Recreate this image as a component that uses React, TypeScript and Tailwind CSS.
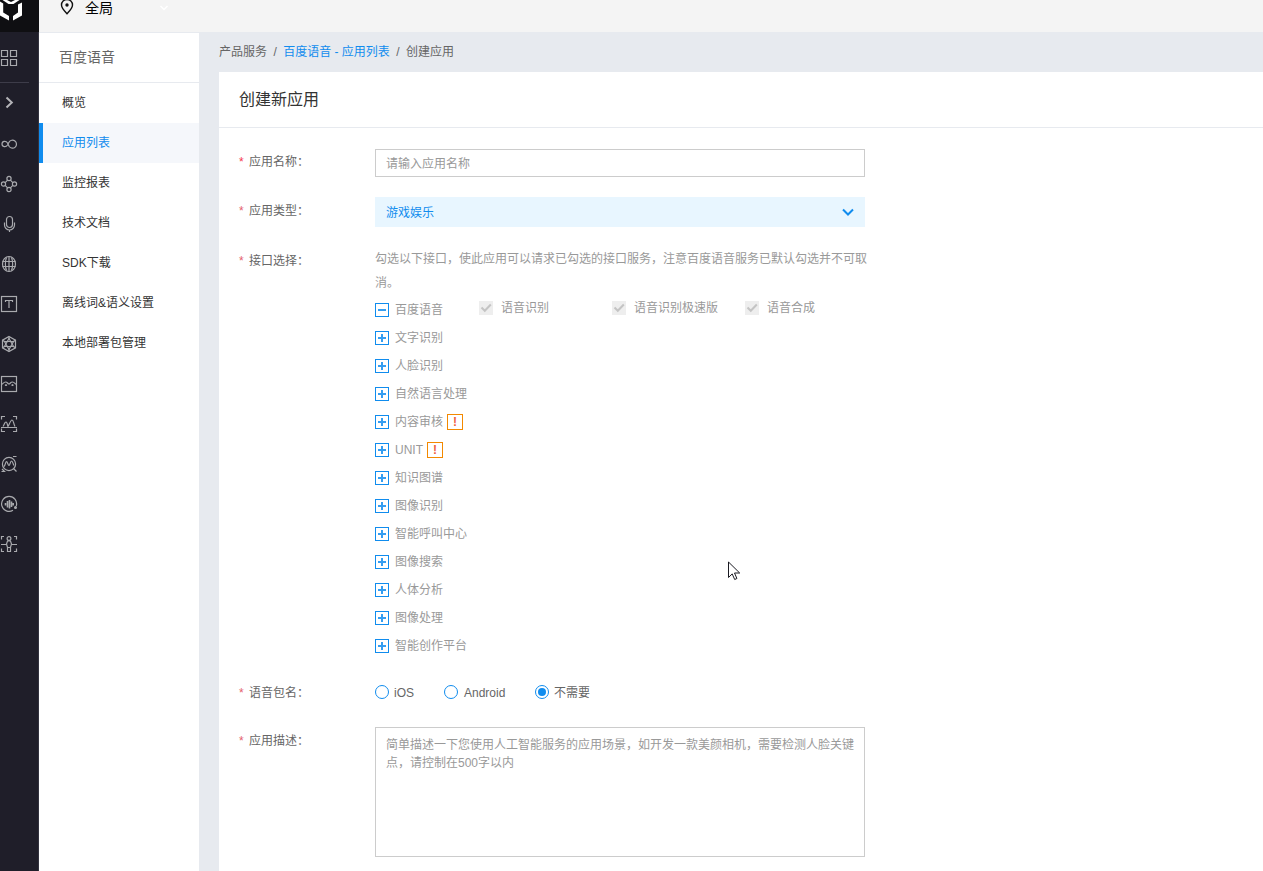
import React, { useState } from 'react';
import { clsx } from 'clsx';

const menuItems = ['概览', '应用列表', '监控报表', '技术文档', 'SDK下载', '离线词&语义设置', '本地部署包管理'];

const speechApis = [
  { name: '语音识别', width: 'w-[133px]' },
  { name: '语音识别极速版', width: 'w-[133px]' },
  { name: '语音合成', width: 'w-[100px]' },
];

const apiGroups = [
  { name: '文字识别' },
  { name: '人脸识别' },
  { name: '自然语言处理' },
  { name: '内容审核', warn: true },
  { name: 'UNIT', warn: true },
  { name: '知识图谱' },
  { name: '图像识别' },
  { name: '智能呼叫中心' },
  { name: '图像搜索' },
  { name: '人体分析' },
  { name: '图像处理' },
  { name: '智能创作平台' },
];

const platforms = [
  { id: 'ios', label: 'iOS', width: 'w-[69px]', gap: 'gap-[5px]' },
  { id: 'android', label: 'Android', width: 'w-[91px]', gap: 'gap-1.5' },
  { id: 'none', label: '不需要', width: 'w-[80px]', gap: 'gap-[5px]' },
];

// Product icons of the left rail, each drawn on an 18px grid
const railIcons = [
  // infinity
  <>
    <path d="M9.200 11.500 7.500 8C6 5.500 2 6 2 9s4 3.500 5.500 1L9 7.200a4 4 0 1 1 .2 4.300" />
  </>,
  // four nodes
  <>
    <circle cx="9" cy="3.500" r="2.100" />
    <circle cx="9" cy="14.500" r="2.100" />
    <circle cx="3.500" cy="9" r="2.100" />
    <circle cx="14.500" cy="9" r="2.100" />
    <path d="M7.600 5.200 5.200 7.600M10.400 5.200l2.400 2.400M7.600 12.800 5.200 10.400M10.400 12.800l2.400-2.400" />
  </>,
  // microphone
  <>
    <rect x="6.500" y="1.500" width="6" height="11" rx="3" />
    <path d="M4.500 7.500v2.500a5 5 0 0 0 10 0V7.500M9.500 14.500v2.500" />
  </>,
  // globe
  <>
    <ellipse cx="9" cy="9" rx="6.500" ry="7.500" />
    <path d="M9 1.500v15M2.500 6.500h13M2.500 11.500h13M6.500 2.500C5 6 5 12 6.500 15.500M11.500 2.500c1.500 3.500 1.500 9.500 0 13" />
  </>,
  // text frame
  <>
    <rect x="1.500" y="1.500" width="15" height="15" />
    <path d="M5.500 7V5.500h7V7M9 5.500v7.500" />
  </>,
  // hexagon knot
  <>
    <path d="M9 1.500 15.500 5.200v7.600L9 16.500 2.500 12.800V5.200z" />
    <path d="M9 3.500 13.500 11.500h-9zM9 14.500 4.500 6.500h9z" />
    <path d="M9 1.500V4M9 14v2.500M2.500 5.200l2.200 1.300M15.500 5.200l-2.200 1.300M2.500 12.800l2.200-1.300M15.500 12.800l-2.200-1.300" />
  </>,
  // picture
  <>
    <rect x="1.500" y="1.500" width="15" height="15" />
    <path d="M1.500 9.500C3 9 3.500 7 5.500 7S8 9 9 9s1.500-2 3.500-2 2.500 2 4 2.500" />
    <path d="M5 10.500l1-0.800 1 0.800M11.500 10.500l1-0.800 1 0.800" />
  </>,
  // scan mountains
  <>
    <path d="M1.500 4.500v-3H5M13 1.500h3.500v3M16.500 13.500v3H13M5 16.500H1.500v-3" />
    <path d="M1 12.500h16M3 11.500C4.500 9.500 4.500 7 6 7s1.500 4.500 2 4.500S10.500 5 12 5s1.500 4 3 6.500" />
  </>,
  // search wave
  <>
    <circle cx="9" cy="9" r="6.600" />
    <path d="M13.500 13.500l3 3M1.500 16.500h3L2 14M13 1.500h3.500M4 11.500c1.500-1 1.500-5 2.500-5S8 10.500 9 10.500 10.300 6 11.500 6s1.500 3 2.500 4.500" />
  </>,
  // sound disc
  <>
    <path d="M13 15.300A7.500 7.500 0 1 1 16.300 11" />
    <path d="M5.500 8v2.500M7.500 6v6.500M9.500 5v8.500M11.500 6.500v5.500M13.200 8v2.500" strokeWidth="1.600" />
    <circle cx="15.500" cy="12.500" r="0.900" fill="currentColor" />
  </>,
  // body scan
  <>
    <path d="M1.500 4.500v-3H4M14 1.500h2.500v3M16.500 13.500v3H14M4 16.500H1.500v-3M1 9.500h5.500M11.500 9.500H17" />
    <circle cx="9" cy="3.500" r="1.900" />
    <path d="M7.500 6h3l1 3-1 3.500h-3l-1-3.500zM7.500 12.500v4h3v-4" />
  </>,
];

function RailIcon({ children }: { children: React.ReactNode }) {
  return (
    <svg className="w-[18px] h-[18px] text-[#a9aaae]" viewBox="0 0 18 18" fill="none" stroke="currentColor" strokeWidth="1.2">
      {children}
    </svg>
  );
}

function IconRail() {
  return (
    <nav className="w-[39px] shrink-0 bg-[#1f1e29] border-r border-[#33333f] flex flex-col">
      <div className="h-8 bg-[#0f0f12] -mr-px">
        <svg className="w-[22px] h-[21px]" viewBox="0 0 22 21" fill="#fff">
          <path d="M0 1.500 3.200 3.500v9L9 16v4.500L0 15.500z" />
          <path d="M22 2.500v13L13 20.500V16l5-3.500V4.500z" />
          <path d="M2.500 0 8.500 4h5L19.500 0h-4.500l-4 2L7 0z" />
        </svg>
      </div>
      <div className="h-[50px] pt-0.5 flex items-center">
        <RailIcon>
          <path d="M1.500 1.500h6v6h-6zM10.500 1.500h6v6h-6zM1.500 10.500h6v6h-6zM10.500 10.500h6v6h-6z" />
        </RailIcon>
      </div>
      <div className="h-px w-[29px] bg-[#3d3c49]" />
      <div className="h-[41px] pb-0.5 flex items-center">
        <svg className="w-[18px] h-[18px] text-[#b4b4b8]" viewBox="0 0 18 18" fill="none" stroke="currentColor" strokeWidth="2">
          <path d="M6.500 3.500 11.800 8.500 6.500 13.500" />
        </svg>
      </div>
      {railIcons.map((icon, i) => (
        <div key={i} className="h-10 flex items-center">
          <RailIcon>{icon}</RailIcon>
        </div>
      ))}
    </nav>
  );
}

function TopBar() {
  return (
    <header className="h-[33px] shrink-0 bg-[#f4f4f4] border-b border-[#e7eaef] flex items-start text-black">
      <svg className="w-[14px] h-4 ml-[21px] -mt-px" viewBox="0 0 14 16" fill="none" stroke="#111" strokeWidth="1.400">
        <path d="M7 14.800C4 11.500 1.500 9 1.500 6a5.500 5.500 0 0 1 11 0c0 3-2.500 5.500-5.500 8.800z" />
        <circle cx="7" cy="6" r="1.700" fill="#111" stroke="none" />
      </svg>
      <span className="ml-[11px] text-sm leading-4">全局</span>
      <svg className="w-2.5 h-2 ml-[46px] mt-1" viewBox="0 0 10 8" fill="none" stroke="#fff" strokeWidth="1.500">
        <path d="M1.500 2 5 5.500 8.500 2" />
      </svg>
    </header>
  );
}

function SideMenu() {
  const [active, setActive] = useState('应用列表');

  return (
    <aside className="w-40 shrink-0 bg-white">
      <h2 className="h-[50px] pl-5 pb-px border-b border-[#e7eaef] flex items-center text-sm text-[#666]">百度语音</h2>
      {menuItems.map((item) => (
        <button
          key={item}
          onClick={() => setActive(item)}
          className={clsx(
            'block w-full h-10 border-l-4 pl-[19px] text-left leading-10',
            item === active ? 'bg-[#f5f7fb] border-[#108cee] text-[#108cee]' : 'border-white text-[#333]'
          )}
        >
          {item}
        </button>
      ))}
    </aside>
  );
}

function FieldLabel({ text, red = false, className }: { text: string; red?: boolean; className: string }) {
  return (
    <div className={clsx('w-[136px] shrink-0 flex leading-6 text-[#666]', className)}>
      <span className={clsx('w-2.5', red ? 'text-[#f5384f]' : 'text-[#e4606d]')}>*</span>
      {text}
    </div>
  );
}

function ToggleBox({ open = false }: { open?: boolean }) {
  return (
    <svg className="w-[14px] h-[14px] shrink-0" viewBox="0 0 14 14" fill="none" stroke="#108cee">
      <rect x="0.500" y="0.500" width="13" height="13" />
      <path d={open ? 'M3 7h8' : 'M3 7h8M7 3v8'} strokeWidth="2" strokeOpacity="0.850" />
    </svg>
  );
}

function DisabledCheck() {
  return (
    <svg className="w-[14px] h-[14px] shrink-0" viewBox="0 0 14 14" fill="none">
      <rect width="14" height="14" fill="#eee" />
      <path d="M2.500 6.500 5.800 9.800 11.800 3.500" stroke="#c4c4c4" strokeWidth="2" />
    </svg>
  );
}

function ApiTree() {
  return (
    <div className="text-[#999]">
      <p className="w-[500px] leading-6">勾选以下接口，使此应用可以请求已勾选的接口服务，注意百度语音服务已默认勾选并不可取消。</p>
      <div className="flex h-7 mt-px items-center">
        <div className="w-[104px] flex items-center gap-1.5">
          <ToggleBox open />
          <span className="leading-7">百度语音</span>
        </div>
        {speechApis.map((api) => (
          <label key={api.name} className={clsx('flex items-center gap-2 pb-1', api.width)}>
            <DisabledCheck />
            <span>{api.name}</span>
          </label>
        ))}
      </div>
      {apiGroups.map((group) => (
        <div key={group.name} className="h-7 flex items-center">
          <ToggleBox />
          <span className="ml-1.5 leading-7">{group.name}</span>
          {group.warn && (
            <span className="ml-1 w-4 h-4 border border-[#f38900] text-[#f0603d] font-bold flex items-center justify-center">!</span>
          )}
        </div>
      ))}
    </div>
  );
}

function CreateForm() {
  const [platform, setPlatform] = useState('none');

  return (
    <form className="pl-5">
      <div className="flex pt-[21px]">
        <FieldLabel text="应用名称：" red className="pt-px" />
        <input
          placeholder="请输入应用名称"
          className="w-[490px] h-7 border border-[#ccc] px-2.5 pt-0.5 placeholder:text-[#999] outline-none"
        />
      </div>
      <div className="flex pt-5">
        <FieldLabel text="应用类型：" className="pt-0.5" />
        <div className="w-[490px] h-[30px] bg-[#e8f6ff] text-[#108cee] px-[11px] flex items-center justify-between">
          <span className="pt-0.5">游戏娱乐</span>
          <svg className="w-3 h-2" viewBox="0 0 12 8" fill="none" stroke="currentColor" strokeWidth="2">
            <path d="M1 1.500 6 6.500 11 1.500" />
          </svg>
        </div>
      </div>
      <div className="flex pt-5">
        <FieldLabel text="接口选择：" className="pt-0.5" />
        <ApiTree />
      </div>
      <div className="flex pt-5 text-[#666]">
        <FieldLabel text="语音包名：" className="pt-px" />
        {platforms.map((p) => (
          <label key={p.id} onClick={() => setPlatform(p.id)} className={clsx('flex items-center h-6', p.gap, p.width)}>
            <span className="w-[14px] h-[14px] rounded-full border border-[#108cee] flex items-center justify-center">
              {platform === p.id && <span className="w-2 h-2 rounded-full bg-[#108cee]" />}
            </span>
            <span className="pt-0.5">{p.label}</span>
          </label>
        ))}
      </div>
      <div className="flex pt-[22px]">
        <FieldLabel text="应用描述：" className="pt-0.5" />
        <textarea
          placeholder="简单描述一下您使用人工智能服务的应用场景，如开发一款美颜相机，需要检测人脸关键点，请控制在500字以内"
          className="w-[490px] h-[130px] resize-none border border-[#ccc] pl-2.5 pr-2 py-2 leading-[18px] placeholder:text-[#999] outline-none"
        />
      </div>
    </form>
  );
}

function MouseCursor() {
  return (
    <svg className="absolute left-[728px] top-[561px] w-[13px] h-5" viewBox="0 0 13 20" fill="#fff" stroke="#1a1a22">
      <path d="M0.500 1v15.500l3.700-3.600 2.500 5.600 2.200-1-2.400-5.500h5.200z" />
    </svg>
  );
}

export default function App() {
  return (
    <div className="relative w-full h-[871px] overflow-hidden flex bg-[#e7eaef] text-xs font-['Liberation_Sans','Noto_Sans_CJK_SC',sans-serif]">
      <IconRail />
      <div className="flex-1 min-w-0 flex flex-col">
        <TopBar />
        <div className="flex-1 min-h-0 flex">
          <SideMenu />
          <main className="flex-1 min-w-0 pl-5 flex flex-col">
            <div className="h-[39px] shrink-0 flex items-center gap-[6.4px] pb-0.5 text-[#666]">
              <span>产品服务</span>
              <span>/</span>
              <a className="text-[#108cee]">百度语音 - 应用列表</a>
              <span>/</span>
              <span>创建应用</span>
            </div>
            <section className="flex-1 bg-white">
              <h1 className="h-14 border-b border-[#e7eaef] pl-5 flex items-center text-base text-[#333]">创建新应用</h1>
              <CreateForm />
            </section>
          </main>
        </div>
      </div>
      <MouseCursor />
    </div>
  );
}
